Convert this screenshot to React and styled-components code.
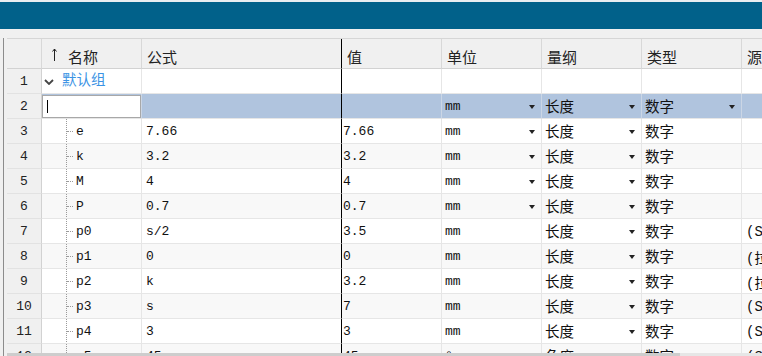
import React from 'react'
import styled, { createGlobalStyle } from 'styled-components'

const COLS = '35px 100px 200px 100px 100px 100px 100px 100px'

const GlobalStyle = createGlobalStyle`
  *, *::before, *::after { box-sizing: border-box; }
  html, body { margin: 0; padding: 0; background: #f0f0f0; overflow: hidden; }
  body { font-family: "Noto Sans CJK SC", "Liberation Sans", sans-serif; }
`

const rows = [
	{ n: 3, name: 'e', formula: '7.66', value: '7.66', unit: 'mm', unitDrop: true, dim: '长度', type: '数字', src: '' },
	{ n: 4, name: 'k', formula: '3.2', value: '3.2', unit: 'mm', unitDrop: true, dim: '长度', type: '数字', src: '' },
	{ n: 5, name: 'M', formula: '4', value: '4', unit: 'mm', unitDrop: true, dim: '长度', type: '数字', src: '' },
	{ n: 6, name: 'P', formula: '0.7', value: '0.7', unit: 'mm', unitDrop: true, dim: '长度', type: '数字', src: '' },
	{ n: 7, name: 'p0', formula: 's/2', value: '3.5', unit: 'mm', dim: '长度', type: '数字', src: '(SI)' },
	{ n: 8, name: 'p1', formula: '0', value: '0', unit: 'mm', dim: '长度', type: '数字', src: '(拉伸)' },
	{ n: 9, name: 'p2', formula: 'k', value: '3.2', unit: 'mm', dim: '长度', type: '数字', src: '(拉伸)' },
	{ n: 10, name: 'p3', formula: 's', value: '7', unit: 'mm', dim: '长度', type: '数字', src: '(SI)' },
	{ n: 11, name: 'p4', formula: '3', value: '3', unit: 'mm', dim: '长度', type: '数字', src: '(SI)' },
	{ n: 12, name: 'p5', formula: '45', value: '45', unit: '°', dim: '角度', type: '数字', src: '(SI)', noDrop: true },
]

const isHan = (s) => /[\u4e00-\u9fff]/.test(s)

export default function App() {
	const text = (s) => isHan(s) ? <Han>{s}</Han> : s
	return (
		<Page>
			<GlobalStyle />
			<TitleBar />
			<Workspace>
				<SidePanel />
				<TableArea>
					<Grid>
						<HeaderRow>
							<HeadCell />
							<HeadCell $pad={10}>
								<SortArrow width="5" height="13" viewBox="0 0 5 13">
									<path d="M2.5 1 V13 M0.5 3.5 L2.5 1 L4.5 3.5" fill="none" stroke="#222" strokeWidth="1" />
								</SortArrow>
								名称
							</HeadCell>
							<HeadCell $divider>公式</HeadCell>
							<HeadCell>值</HeadCell>
							<HeadCell>单位</HeadCell>
							<HeadCell>量纲</HeadCell>
							<HeadCell>类型</HeadCell>
							<HeadCell>源</HeadCell>
						</HeaderRow>

						<Row>
							<NumCell>1</NumCell>
							<Cell $pad={2}>
								<Chevron width="10" height="6" viewBox="0 0 10 6">
									<path d="M1 1 L5 5 L9 1" fill="none" stroke="#444" strokeWidth="1.8" />
								</Chevron>
								<GroupName>默认组</GroupName>
							</Cell>
							<Cell $divider />
							<Cell />
							<Cell />
							<Cell />
							<Cell />
							<Cell />
						</Row>

						<Row>
							<NumCell>2</NumCell>
							<Cell $pad={0} $selected>
								<EditBox><Caret /></EditBox>
							</Cell>
							<Cell $divider $selected />
							<Cell $selected $pad={1} />
							<Cell $selected $pad={3}>mm<DropArrow /></Cell>
							<Cell $selected $pad={3}><Han>长度</Han><DropArrow /></Cell>
							<Cell $selected $pad={3}><Han>数字</Han><DropArrow /></Cell>
							<Cell $selected />
						</Row>

						{rows.map((r) => (
							<Row key={r.n} $alt={r.n % 2 === 0}>
								<NumCell>{r.n}</NumCell>
								<Cell $pad={24}>
									<Guide><Stub /></Guide>
									<NameText>{r.name}</NameText>
								</Cell>
								<Cell $divider>{r.formula}</Cell>
								<Cell $pad={1}>{r.value}</Cell>
								<Cell $pad={3}>{r.unit}{r.unitDrop && <DropArrow />}</Cell>
								<Cell $pad={3}>{text(r.dim)}{!r.noDrop && <DropArrow />}</Cell>
								<Cell $pad={3}>{text(r.type)}</Cell>
								<Cell $pad={4}>{r.src && <Source>{r.src}</Source>}</Cell>
							</Row>
						))}
					</Grid>
					<ScrollTrack><ScrollThumb /></ScrollTrack>
				</TableArea>
			</Workspace>
		</Page>
	)
}

const Page = styled.div`
	width: 762px;
	height: 356px;
	display: flex;
	flex-direction: column;
	overflow: hidden;
	background: #f0f0f0;
`

const TitleBar = styled.div`
	flex: none;
	height: 29px;
	border-top: 2px solid #e9eef1;
	background: #01618a;
`

const Workspace = styled.div`
	flex: 1;
	min-height: 0;
	display: flex;
	padding-top: 9px;
`

const SidePanel = styled.div`
	flex: none;
	width: 4px;
	border-right: 1px solid #8c8c8c;
	margin-right: 3px;
`

const TableArea = styled.div`
	flex: 1;
	min-width: 0;
	display: flex;
	flex-direction: column;
	overflow: hidden;
`

const Grid = styled.div`
	flex: 1;
	min-height: 0;
	overflow: hidden;
	display: flex;
	flex-direction: column;
`

const HeaderRow = styled.div`
	flex: none;
	display: grid;
	grid-template-columns: ${COLS};
	width: max-content;
	height: 31px;
	border-top: 1px solid #d6d6d6;
	background: #f0f0f0;
`

const HeadCell = styled.div`
	display: flex;
	align-items: center;
	padding: 5px 0 0 ${p => p.$pad ?? 5}px;
	border-right: 1px solid ${p => p.$divider ? '#000' : '#d8d8d8'};
	border-bottom: 1px solid #d2d2d2;
	font-size: 15px;
	line-height: 1;
	color: #222;
	white-space: nowrap;
	overflow: hidden;
`

const SortArrow = styled.svg`
	flex: none;
	margin-right: 11px;
	margin-top: -3px;
`

const Row = styled.div`
	flex: none;
	display: grid;
	grid-template-columns: ${COLS};
	width: max-content;
	height: 25px;
	background: ${p => p.$alt ? '#f8f8f8' : '#ffffff'};
`

const NumCell = styled.div`
	display: flex;
	align-items: center;
	justify-content: center;
	padding-top: 1px;
	background: #f0f0f0;
	border-right: 1px solid #d2d2d2;
	border-bottom: 1px solid #e2e2e2;
	font: 13px "Liberation Mono", monospace;
	color: #222;
`

const Cell = styled.div`
	display: flex;
	align-items: center;
	min-width: 0;
	overflow: hidden;
	white-space: nowrap;
	padding: 1px 0 0 ${p => p.$pad ?? 4}px;
	border-right: 1px solid ${p => p.$divider ? '#000' : p.$selected ? '#cbd6e5' : '#e6e6e6'};
	border-bottom: 1px solid #e6e6e6;
	background: ${p => p.$selected ? '#b0c4de' : 'transparent'};
	font: 13px "Liberation Mono", "Noto Sans CJK SC", monospace;
	line-height: 1;
	color: #111;
`

const Han = styled.span`
	font: 14.5px "Noto Sans CJK SC", sans-serif;
	line-height: 1;
	color: #111;
`

const Source = styled.span`
	font: 14px "Liberation Mono", "Noto Sans CJK SC", monospace;
`

const Chevron = styled.svg`
	flex: none;
	margin-right: 8px;
`

const GroupName = styled.span`
	font-size: 14.5px;
	line-height: 1;
	color: #3b93e4;
`

const EditBox = styled.div`
	width: 100%;
	height: 100%;
	margin-top: -1px;
	display: flex;
	align-items: center;
	padding-left: 4px;
	background: #fff;
	border: 1px solid #a8a8a8;
`

const Caret = styled.span`
	width: 1px;
	height: 13px;
	background: #000;
`

const DropArrow = styled.span`
	margin-left: auto;
	margin-right: 6px;
	width: 0;
	height: 0;
	border-left: 3.5px solid transparent;
	border-right: 3.5px solid transparent;
	border-top: 4px solid #222;
`

const Guide = styled.span`
	align-self: stretch;
	margin-top: -1px;
	margin-bottom: -1px;
	width: 9px;
	display: flex;
	align-items: center;
	border-left: 1px dotted #9a9a9a;
`

const Stub = styled.span`
	width: 6px;
	border-top: 1px dotted #9a9a9a;
`

const NameText = styled.span`
	padding-left: 1px;
`

const ScrollTrack = styled.div`
	flex: none;
	height: 3px;
	background: #e6e6e6;
`

const ScrollThumb = styled.div`
	width: 673px;
	height: 100%;
	background: #cdcdcd;
`
